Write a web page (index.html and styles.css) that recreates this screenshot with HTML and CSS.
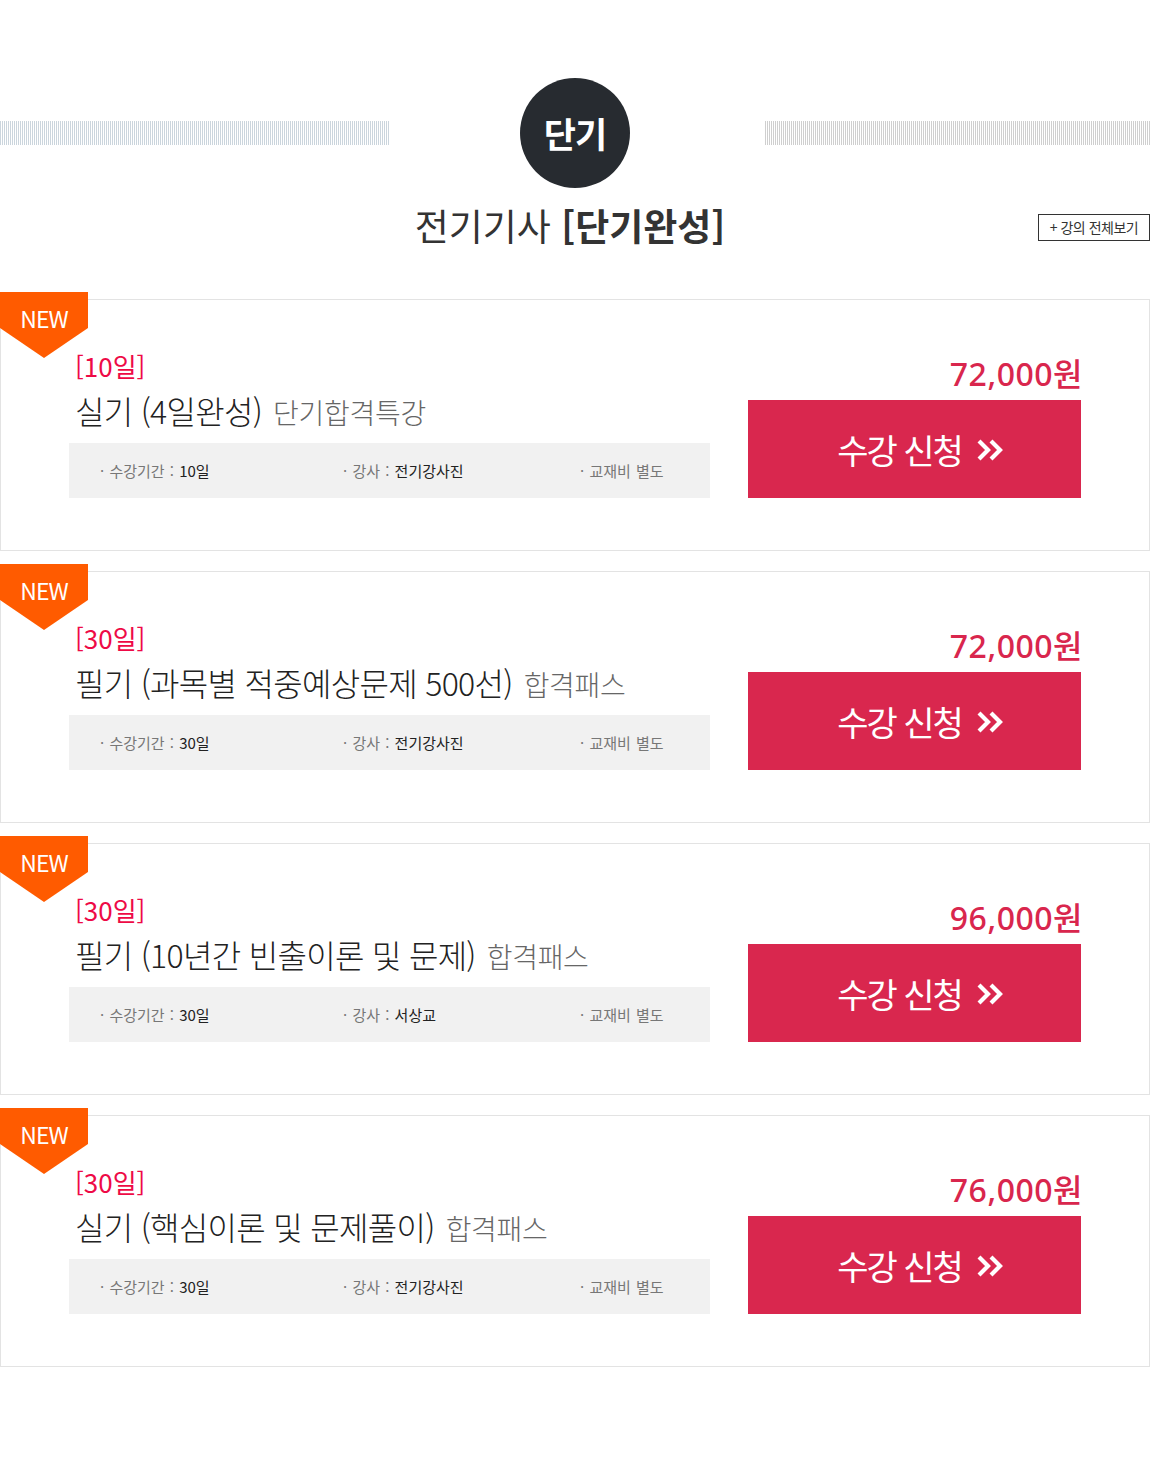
FILE: index.html
```html
<!DOCTYPE html>
<html lang="ko">
<head>
<meta charset="utf-8">
<title>전기기사 단기완성</title>
<link rel="stylesheet" href="styles.css">
</head>
<body>
<div class="page">
  <div class="hero">
    <div class="stripe stripe-left"></div>
    <div class="circle">단기</div>
    <div class="stripe stripe-right"></div>
  </div>
  <div class="title-row">
    <div></div>
    <h1 class="title">전기기사 <b>[단기완성]</b></h1>
    <a class="more" href="#">+ 강의 전체보기</a>
  </div>

  <div class="cards">
    <div class="card">
      <div class="badge">NEW</div>
      <div class="left">
        <div class="period">[10일]</div>
        <div class="name">실기 (4일완성)<span class="sub">단기합격특강</span></div>
        <div class="info">
          <span class="item">· 수강기간 : <em>10일</em></span>
          <span class="item">· 강사 : <em>전기강사진</em></span>
          <span class="item">· 교재비 별도</span>
        </div>
      </div>
      <div class="right">
        <div class="price">72,000원</div>
        <a class="apply" href="#">수강 신청<svg class="chev" viewBox="0 0 30 24"><path d="M3 3 L12 12 L3 21 M15 3 L24 12 L15 21" fill="none" stroke="#fff" stroke-width="4.2" stroke-linejoin="miter"/></svg></a>
      </div>
    </div>

    <div class="card">
      <div class="badge">NEW</div>
      <div class="left">
        <div class="period">[30일]</div>
        <div class="name">필기 (과목별 적중예상문제 500선)<span class="sub">합격패스</span></div>
        <div class="info">
          <span class="item">· 수강기간 : <em>30일</em></span>
          <span class="item">· 강사 : <em>전기강사진</em></span>
          <span class="item">· 교재비 별도</span>
        </div>
      </div>
      <div class="right">
        <div class="price">72,000원</div>
        <a class="apply" href="#">수강 신청<svg class="chev" viewBox="0 0 30 24"><path d="M3 3 L12 12 L3 21 M15 3 L24 12 L15 21" fill="none" stroke="#fff" stroke-width="4.2" stroke-linejoin="miter"/></svg></a>
      </div>
    </div>

    <div class="card">
      <div class="badge">NEW</div>
      <div class="left">
        <div class="period">[30일]</div>
        <div class="name">필기 (10년간 빈출이론 및 문제)<span class="sub">합격패스</span></div>
        <div class="info">
          <span class="item">· 수강기간 : <em>30일</em></span>
          <span class="item">· 강사 : <em>서상교</em></span>
          <span class="item">· 교재비 별도</span>
        </div>
      </div>
      <div class="right">
        <div class="price">96,000원</div>
        <a class="apply" href="#">수강 신청<svg class="chev" viewBox="0 0 30 24"><path d="M3 3 L12 12 L3 21 M15 3 L24 12 L15 21" fill="none" stroke="#fff" stroke-width="4.2" stroke-linejoin="miter"/></svg></a>
      </div>
    </div>

    <div class="card">
      <div class="badge">NEW</div>
      <div class="left">
        <div class="period">[30일]</div>
        <div class="name">실기 (핵심이론 및 문제풀이)<span class="sub">합격패스</span></div>
        <div class="info">
          <span class="item">· 수강기간 : <em>30일</em></span>
          <span class="item">· 강사 : <em>전기강사진</em></span>
          <span class="item">· 교재비 별도</span>
        </div>
      </div>
      <div class="right">
        <div class="price">76,000원</div>
        <a class="apply" href="#">수강 신청<svg class="chev" viewBox="0 0 30 24"><path d="M3 3 L12 12 L3 21 M15 3 L24 12 L15 21" fill="none" stroke="#fff" stroke-width="4.2" stroke-linejoin="miter"/></svg></a>
      </div>
    </div>
  </div>
</div>
</body>
</html>
```

FILE: styles.css
```css
* { box-sizing: border-box; }
html, body { margin: 0; padding: 0; background: #fff; }
body {
  font-family: "Noto Sans CJK KR", "Noto Sans", sans-serif;
  color: #222;
}
.page { width: 1150px; }

.hero {
  display: grid;
  grid-template-columns: 1fr 110px 1fr;
  align-items: center;
  padding-top: 78px;
}
.stripe {
  height: 24px;
  background: repeating-linear-gradient(90deg, #cbd5dd 0 1px, #fff 1px 2px);
}
.stripe-left { width: 389px; justify-self: start; }
.stripe-right {
  width: 385px;
  justify-self: end;
  background: repeating-linear-gradient(90deg, #cfcfcf 0 1px, #fff 1px 2px);
}
.circle {
  width: 110px;
  height: 110px;
  border-radius: 50%;
  background: #272b30;
  color: #fff;
  font-size: 35px;
  font-weight: 700;
  letter-spacing: -1px;
  display: flex;
  align-items: center;
  justify-content: center;
  line-height: 1;
  padding-bottom: 2px;
}

.title-row {
  display: grid;
  grid-template-columns: 1fr auto 1fr;
  align-items: center;
  margin-top: 15px;
  height: 44px;
}
.title {
  margin: 0 10px 0 0;
  font-size: 37px;
  line-height: 44px;
  font-weight: 400;
  color: #333;
  letter-spacing: 0;
}
.title b { font-weight: 700; }
.more {
  justify-self: end;
  margin-top: 4px;
  width: 112px;
  height: 27px;
  border: 1px solid #333;
  color: #333;
  font-size: 14px;
  letter-spacing: -0.5px;
  text-decoration: none;
  display: flex;
  align-items: center;
  justify-content: center;
  line-height: 1;
}

.cards {
  margin-top: 52px;
  display: flex;
  flex-direction: column;
  gap: 20px;
}
.card {
  position: relative;
  border: 1px solid #e3e3e3;
  width: 1150px;
  height: 252px;
  padding: 53px 68px 52px 68px;
  display: flex;
  justify-content: space-between;
  align-items: flex-end;
}
.badge {
  position: absolute;
  top: -8px;
  left: -1px;
  width: 88px;
  height: 66px;
  background: #ff5b00;
  clip-path: polygon(0 0, 100% 0, 100% 54.5%, 50% 100%, 0 54.5%);
  color: #fff;
  font-size: 23px;
  letter-spacing: -1px;
  text-align: center;
  line-height: 1;
  padding-top: 15px;
}
.left {
  width: 641px;
  display: flex;
  flex-direction: column;
}
.period {
  padding-left: 6px;
  font-size: 26px;
  line-height: 30px;
  color: #ee0a46;
  letter-spacing: 0;
}
.name {
  padding-left: 6px;
  margin-top: 9px;
  font-size: 32px;
  line-height: 40px;
  color: #222;
  font-weight: 300;
  letter-spacing: -0.7px;
  white-space: nowrap;
}
.sub {
  margin-left: 11px;
  font-size: 28px;
  color: #666;
  letter-spacing: -0.3px;
}
.info {
  margin-top: 11px;
  height: 55px;
  background: #f1f1f1;
  display: grid;
  grid-template-columns: 243px 237px 1fr;
  align-items: center;
  padding-left: 31px;
  font-size: 15px;
  letter-spacing: 0;
  word-spacing: 1px;
  color: #777;
}
.item em {
  font-style: normal;
  color: #222;
}
.right {
  width: 333px;
  display: flex;
  flex-direction: column;
  align-items: stretch;
}
.price {
  text-align: right;
  font-family: "Noto Sans", "Noto Sans CJK KR", sans-serif;
  font-size: 32px;
  font-weight: 500;
  line-height: 40px;
  color: #d9264d;
  letter-spacing: 0.5px;
  margin-right: -2px;
  margin-bottom: 6px;
}
.apply {
  height: 98px;
  background: #d9274e;
  color: #fff;
  text-decoration: none;
  font-size: 34px;
  letter-spacing: -2px;
  display: flex;
  align-items: center;
  justify-content: center;
  padding-left: 14px;
}
.chev {
  width: 30px;
  height: 24px;
  margin-left: 14px;
  margin-top: 2px;
}
```
